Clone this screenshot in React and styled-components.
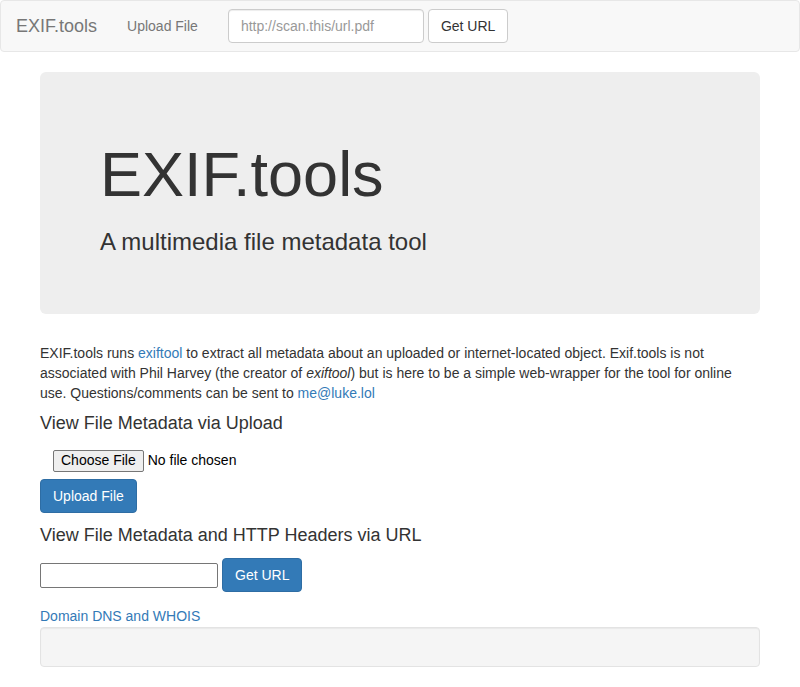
import React from "react";
import styled, { createGlobalStyle } from "styled-components";

const Global = createGlobalStyle`
  * { box-sizing: border-box; }
  html, body { margin: 0; background: #fff; }
  body {
    font-family: "Liberation Sans", Arial, Helvetica, sans-serif;
    font-size: 14px;
    line-height: 1.428571;
    color: #333;
  }
`;

const Navbar = styled.nav`
  display: flex;
  align-items: flex-start;
  height: 52px;
  margin-bottom: 20px;
  background: #f8f8f8;
  border: 1px solid #e7e7e7;
  border-radius: 4px;
`;

const Brand = styled.a`
  padding: 15px;
  font-size: 18px;
  line-height: 20px;
  color: #777;
  text-decoration: none;
`;

const NavLink = styled.a`
  padding: 15px;
  line-height: 20px;
  color: #777;
  text-decoration: none;
`;

const NavForm = styled.form`
  display: flex;
  gap: 4px;
  margin-top: 8px;
  padding: 0 15px;
`;

const FormControl = styled.input`
  width: ${(p) => p.$w || 196}px;
  height: 34px;
  padding: 6px 12px;
  font: inherit;
  color: #555;
  background: #fff;
  border: 1px solid #ccc;
  border-radius: 4px;
  box-shadow: inset 0 1px 1px rgba(0, 0, 0, 0.075);
  &::placeholder { color: #999; }
`;

const Btn = styled.button`
  display: inline-block;
  height: 34px;
  padding: 6px 12px;
  font: inherit;
  line-height: 20px;
  border-radius: 4px;
  border: 1px solid ${(p) => (p.$primary ? "#2e6da4" : "#ccc")};
  background: ${(p) => (p.$primary ? "#337ab7" : "#fff")};
  color: ${(p) => (p.$primary ? "#fff" : "#333")};
  cursor: pointer;
`;

const Container = styled.main`
  width: 720px;
  margin: 0 auto;
`;

const Jumbotron = styled.section`
  display: flow-root;
  padding: 48px 60px;
  margin-bottom: 30px;
  background: #eee;
  border-radius: 6px;
`;

const H1 = styled.h1`
  margin: 20px 0 20px;
  font-size: 63px;
  line-height: 1.1;
  font-weight: 500;
`;

const Lead = styled.h3`
  margin: 0 0 10px;
  font-size: 24px;
  line-height: 1.1;
  font-weight: 500;
`;

const Para = styled.p`
  margin: 0 0 10px;
`;

const Link = styled.a`
  color: #337ab7;
  text-decoration: none;
`;

const H4 = styled.h4`
  margin: 10px 0 ${(p) => p.$mb || 10}px;
  font-size: 18px;
  line-height: 1.1;
  font-weight: 500;
`;

const FileRow = styled.div`
  display: flex;
  align-items: center;
  gap: 4px;
  margin: 17px 0 7px 13px;
  height: 22px;
`;

const FileButton = styled.label`
  display: inline-flex;
  align-items: center;
  height: 22px;
  padding: 0 7px;
  font-size: 14px;
  color: #000;
  background: #efefef;
  border: 1px solid #767676;
  border-radius: 2px;
`;

const FileName = styled.span`
  color: #000;
`;

const UploadBlock = styled.div`
  margin-bottom: 13px;
`;

const UrlRow = styled.div`
  display: flex;
  align-items: center;
  gap: 4px;
  margin-top: 12px;
  margin-bottom: 15px;
`;

const PlainInput = styled.input`
  width: 178px;
  height: 25px;
  padding: 1px 2px;
  font: inherit;
  border: 1px solid #767676;
  border-radius: 2px;
`;

const Well = styled.div`
  min-height: 40px;
  padding: 19px;
  background: #f5f5f5;
  border: 1px solid #e3e3e3;
  border-radius: 4px;
  box-shadow: inset 0 1px 1px rgba(0, 0, 0, 0.05);
`;

export default function App() {
  return (
    <>
      <Global />
      <Navbar>
        <Brand href="#">EXIF.tools</Brand>
        <NavLink href="#">Upload File</NavLink>
        <NavForm onSubmit={(e) => e.preventDefault()}>
          <FormControl placeholder="http://scan.this/url.pdf" />
          <Btn type="submit">Get URL</Btn>
        </NavForm>
      </Navbar>
      <Container>
        <Jumbotron>
          <H1>EXIF.tools</H1>
          <Lead>A multimedia file metadata tool</Lead>
        </Jumbotron>
        <Para>
          EXIF.tools runs <Link href="#">exiftool</Link> to extract all metadata
          about an uploaded or internet-located object. Exif.tools is not
          associated with Phil Harvey (the creator of <em>exiftool</em>) but is
          here to be a simple web-wrapper for the tool for online use.
          Questions/comments can be sent to <Link href="#">me@luke.lol</Link>
        </Para>
        <H4>View File Metadata via Upload</H4>
        <FileRow>
          <FileButton>Choose File</FileButton>
          <FileName>No file chosen</FileName>
        </FileRow>
        <UploadBlock>
          <Btn $primary>Upload File</Btn>
        </UploadBlock>
        <H4 $mb={0}>View File Metadata and HTTP Headers via URL</H4>
        <UrlRow>
          <PlainInput />
          <Btn $primary>Get URL</Btn>
        </UrlRow>
        <Link href="#">Domain DNS and WHOIS</Link>
        <Well />
      </Container>
    </>
  );
}
